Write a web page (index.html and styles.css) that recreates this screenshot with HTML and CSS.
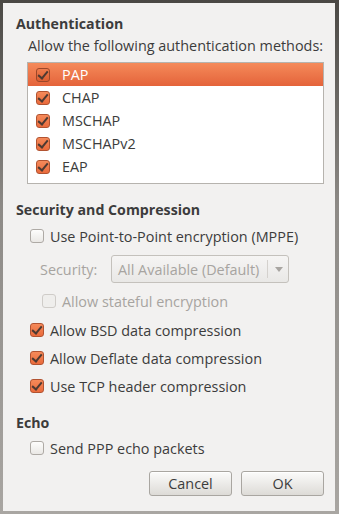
FILE: index.html
```html
<!DOCTYPE html>
<html lang="en">
<head>
    <meta charset="UTF-8">
    <title>PPP Settings</title>
    <link rel="stylesheet" href="styles.css">
</head>
<body>
    <div class="frame">
        <div class="dialog">
            <h2 class="section-title">Authentication</h2>
            <p class="hint">Allow the following authentication methods:</p>
            <ul class="method-list">
                <li class="method selected"><span class="check on"></span>PAP</li>
                <li class="method"><span class="check on"></span>CHAP</li>
                <li class="method"><span class="check on"></span>MSCHAP</li>
                <li class="method"><span class="check on"></span>MSCHAPv2</li>
                <li class="method"><span class="check on"></span>EAP</li>
            </ul>

            <h2 class="section-title security-title">Security and Compression</h2>
            <div class="option"><span class="check"></span>Use Point-to-Point encryption (MPPE)</div>
            <div class="combo-row">
                <span class="combo-label">Security:</span>
                <div class="combo">
                    <span class="combo-text">All Available (Default)</span>
                    <span class="combo-arrow"></span>
                </div>
            </div>
            <div class="option sub disabled"><span class="check"></span>Allow stateful encryption</div>
            <div class="option first-compress"><span class="check on"></span>Allow BSD data compression</div>
            <div class="option"><span class="check on"></span>Allow Deflate data compression</div>
            <div class="option"><span class="check on"></span>Use TCP header compression</div>

            <h2 class="section-title echo-title">Echo</h2>
            <div class="option echo-option"><span class="check"></span>Send PPP echo packets</div>

            <div class="buttons">
                <button class="btn">Cancel</button>
                <button class="btn">OK</button>
            </div>
        </div>
    </div>
</body>
</html>
```

FILE: styles.css
```css
:root {
    --bg: #f2f1f0;
    --text: #3c3c3c;
    --muted: #a7a4a0;
    --orange: #f07746;
    --orange-dark: #e4633a;
}

* {
    margin: 0;
    padding: 0;
    box-sizing: border-box;
}

body {
    width: 339px;
    height: 514px;
    font-family: 'Open Sans', sans-serif;
    font-size: 14.4px;
    color: var(--text);
    overflow: hidden;
}

.frame {
    height: 100%;
    padding: 3px 4px 3px 3px;
    background: linear-gradient(#4a4844, #8d8a86 40%, #a9a6a2);
}

.dialog {
    height: 100%;
    background: var(--bg);
    padding: 13px 11px 0 13px;
    display: flex;
    flex-direction: column;
}

.section-title {
    font-size: 14.2px;
    font-weight: 700;
    line-height: 16px;
}

.hint {
    margin: 5px 0 0 12px;
    line-height: 17px;
    white-space: nowrap;
}

.method-list {
    list-style: none;
    margin: 8px 0 0 11px;
    height: 122px;
    border: 1px solid #b6b3ae;
    background: #fff;
}

.method {
    height: 23px;
    display: flex;
    align-items: center;
    padding-left: 8px;
    gap: 12px;
}

.method.selected {
    background: linear-gradient(#f58a5a, var(--orange-dark));
    color: #fff;
}

.check {
    width: 14px;
    height: 14px;
    flex-shrink: 0;
    border: 1px solid #aeaaa5;
    border-radius: 3px;
    background: linear-gradient(#fdfdfc, #eae8e5);
    position: relative;
}

.check.on {
    border-color: #b25331;
    background: linear-gradient(#f58a5a, #ea6b3c);
}

.check.on::after {
    content: "";
    position: absolute;
    left: 3px;
    top: 0;
    width: 4px;
    height: 8px;
    border: solid #4d3a32;
    border-width: 0 2px 2px 0;
    transform: rotate(40deg);
}

.selected .check.on {
    border-color: #9c4729;
    background: linear-gradient(#ef7c4d, #dc5d31);
}

.security-title {
    margin-top: 18px;
}

.option {
    display: flex;
    align-items: center;
    gap: 6px;
    height: 20px;
    margin: 8px 0 0 14px;
    white-space: nowrap;
}

.option.sub {
    margin-left: 26px;
    margin-top: 8px;
}

.option.first-compress {
    margin-top: 9px;
}

.option.echo-option {
    margin-top: 7px;
}

.option.disabled {
    color: var(--muted);
}

.option.disabled .check {
    border-color: #cfccc8;
    background: #efeeec;
}

.combo-row {
    display: flex;
    align-items: center;
    margin: 9px 0 0 24px;
    color: var(--muted);
}

.combo-label {
    width: 71px;
}

.combo {
    width: 178px;
    height: 28px;
    display: flex;
    align-items: center;
    border: 1px solid #c4c1bc;
    border-radius: 3px;
    background: linear-gradient(#f6f5f4, #e9e8e6);
    padding-left: 6px;
}

.combo-text {
    flex: 1;
    white-space: nowrap;
}

.combo-arrow {
    width: 21px;
    height: 18px;
    border-left: 1px solid #d4d1cd;
    position: relative;
}

.combo-arrow::after {
    content: "";
    position: absolute;
    left: 7px;
    top: 7px;
    border: 4px solid transparent;
    border-top: 5px solid #a8a5a1;
    border-bottom: 0;
}

.echo-title {
    margin-top: 19px;
}

.buttons {
    display: flex;
    justify-content: flex-end;
    gap: 9px;
    margin-top: 13px;
}

.btn {
    width: 83px;
    height: 25px;
    font-family: inherit;
    font-size: 14.4px;
    color: var(--text);
    border: 1px solid #a9a6a1;
    border-radius: 3px;
    background: linear-gradient(#fbfbfa, #dddbd7);
    box-shadow: inset 0 1px 0 #fff;
}
```
